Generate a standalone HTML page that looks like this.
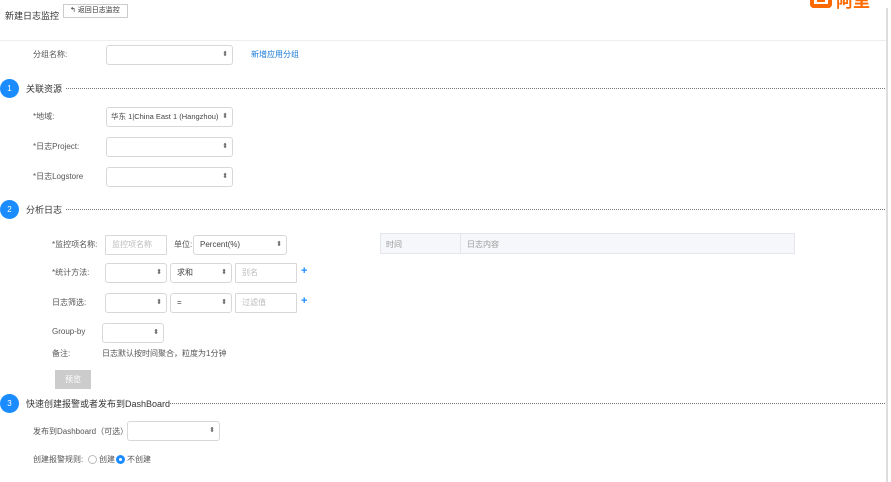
<!DOCTYPE html>
<html><head><meta charset="utf-8"><style>
*{box-sizing:border-box;margin:0;padding:0}
body{width:891px;height:482px;overflow:hidden;background:#fff;position:relative;font-family:"Liberation Sans","Noto Sans CJK SC",sans-serif;font-size:8px;color:#555}
.a{position:absolute;white-space:nowrap}
.sel,.inp{position:absolute;height:20px;border:1px solid #d8d8d8;border-radius:3px;background:#fff;font-size:8px;line-height:18px;padding-left:6px;color:#444;overflow:hidden;white-space:nowrap}
.sel:after{content:"⬍";position:absolute;right:4px;top:0;font-size:7px;color:#666;background:#fff}
.inp{color:#bbb;border-radius:1px}
.c{position:absolute;width:19px;height:19px;border-radius:50%;background:#1a8cff;color:#fff;font-size:8px;text-align:center;line-height:19px;left:0}
.h{position:absolute;font-size:9px;color:#333;left:26px}
.dot{position:absolute;border-top:1px dotted #777;right:6px;height:0}
.lb{position:absolute;color:#555;font-size:8px}
.plus{position:absolute;color:#1a8cff;font-size:11px;font-weight:bold}
</style></head><body>
<div class="a" style="left:5px;top:9px;font-size:9px;color:#333">新建日志监控</div>
<div class="a" style="left:63px;top:4px;width:65px;height:14px;border:1px solid #ccc;font-size:7px;line-height:12px;padding-left:6px;color:#333">↰ 返回日志监控</div>
<div class="a" style="left:810px;top:-4px;width:22px;height:12px;border:4px solid #ff6a00;border-top:none;border-radius:0 0 4px 4px"></div>
<div class="a" style="left:817px;top:0px;width:8px;height:2px;background:#ff6a00"></div>
<div class="a" style="left:836px;top:-13px;font-size:17px;font-weight:bold;color:#ff6a00">阿里</div>
<div class="a" style="left:886px;top:8px;width:2px;height:474px;background:#ddd"></div>
<div class="a" style="left:0;top:40px;width:886px;height:1px;background:#eee"></div>

<div class="lb" style="left:33px;top:49px">分组名称:</div>
<div class="sel" style="left:106px;top:45px;width:127px"></div>
<div class="a" style="left:251px;top:49px;color:#1a7ad6">新增应用分组</div>

<div class="c" style="top:79px">1</div><div class="h" style="top:82px">关联资源</div><div class="dot" style="left:66px;top:88px"></div>
<div class="lb" style="left:33px;top:111px">*地域:</div>
<div class="sel" style="left:106px;top:107px;width:127px;padding-left:4px;font-size:7.5px">华东 1|China East 1 (Hangzhou)</div>
<div class="lb" style="left:33px;top:141px">*日志Project:</div>
<div class="sel" style="left:106px;top:137px;width:127px"></div>
<div class="lb" style="left:33px;top:171px">*日志Logstore</div>
<div class="sel" style="left:106px;top:167px;width:127px"></div>

<div class="c" style="top:200px">2</div><div class="h" style="top:203px">分析日志</div><div class="dot" style="left:66px;top:209px"></div>
<div class="lb" style="left:52px;top:239px">*监控项名称:</div>
<div class="inp" style="left:105px;top:235px;width:62px">监控项名称</div>
<div class="lb" style="left:174px;top:239px">单位:</div>
<div class="sel" style="left:193px;top:235px;width:94px">Percent(%)</div>
<div class="a" style="left:380px;top:233px;width:415px;height:21px;border:1px solid #e4e6ea;background:#f5f7fa"></div>
<div class="a" style="left:460px;top:233px;width:1px;height:21px;background:#e4e6ea"></div>
<div class="a" style="left:386px;top:239px;color:#999">时间</div>
<div class="a" style="left:467px;top:239px;color:#999">日志内容</div>

<div class="lb" style="left:52px;top:267px">*统计方法:</div>
<div class="sel" style="left:105px;top:263px;width:62px"></div>
<div class="sel" style="left:170px;top:263px;width:62px">求和</div>
<div class="inp" style="left:235px;top:263px;width:62px">别名</div>
<div class="plus" style="left:301px;top:265px">+</div>
<div class="lb" style="left:52px;top:297px">日志筛选:</div>
<div class="sel" style="left:105px;top:293px;width:62px"></div>
<div class="sel" style="left:170px;top:293px;width:62px">=</div>
<div class="inp" style="left:235px;top:293px;width:62px">过滤值</div>
<div class="plus" style="left:301px;top:295px">+</div>
<div class="lb" style="left:52px;top:327px">Group-by</div>
<div class="sel" style="left:102px;top:323px;width:62px"></div>
<div class="lb" style="left:52px;top:348px">备注:</div>
<div class="lb" style="left:102px;top:348px">日志默认按时间聚合，粒度为1分钟</div>
<div class="a" style="left:55px;top:370px;width:36px;height:19px;background:#ccc;color:#fff;text-align:center;line-height:19px">预览</div>

<div class="c" style="top:394px">3</div><div class="h" style="top:397px">快速创建报警或者发布到DashBoard</div><div class="dot" style="left:170px;top:403px"></div>
<div class="lb" style="left:33px;top:426px">发布到Dashboard（可选）:</div>
<div class="sel" style="left:127px;top:421px;width:93px"></div>
<div class="lb" style="left:33px;top:454px">创建报警规则:</div>
<div class="a" style="left:88px;top:455px;width:9px;height:9px;border:1px solid #bbb;border-radius:50%"></div>
<div class="lb" style="left:99px;top:454px">创建</div>
<div class="a" style="left:116px;top:455px;width:9px;height:9px;border-radius:50%;background:#1a8cff"><div style="width:3px;height:3px;background:#fff;border-radius:50%;margin:3px"></div></div>
<div class="lb" style="left:127px;top:454px">不创建</div>
</body></html>
